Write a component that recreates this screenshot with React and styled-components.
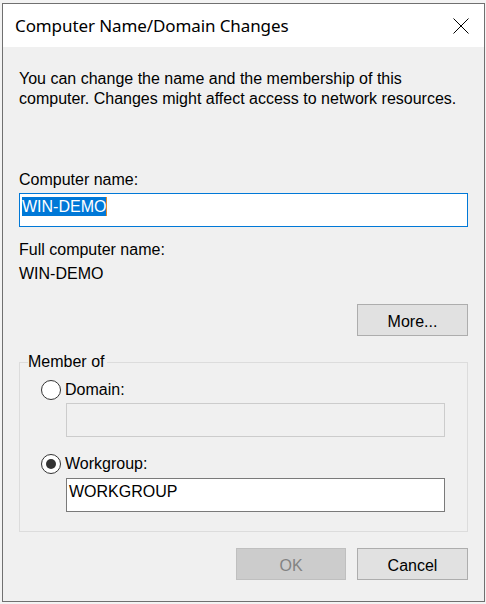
import React from 'react'
import styled, { createGlobalStyle } from 'styled-components'

const GlobalStyle = createGlobalStyle`
  html, body {
    margin: 0;
    padding: 0;
    background: #f3f3f3;
  }
  body {
    font-family: "Liberation Sans", Arial, sans-serif;
    color: #000;
  }
`

const Window = styled.div`
  box-sizing: border-box;
  width: 483px;
  height: 599px;
  margin: 3px 0 0 2px;
  border: 1px solid #707070;
  background: #f0f0f0;
  display: flex;
  flex-direction: column;
`

const TitleBar = styled.div`
  height: 43px;
  background: #fff;
  display: flex;
  align-items: center;
  justify-content: space-between;
  padding: 0 15px 0 12px;
`

const Title = styled.div`
  font-family: "Noto Sans", "Open Sans", sans-serif;
  font-size: 17px;
  letter-spacing: -0.1px;
  color: #000;
`

const CloseIcon = styled.svg`
  width: 16px;
  height: 16px;
  display: block;
`

const Content = styled.div`
  padding: 22px 16px 0 16px;
  font-size: 16px;
  line-height: 20px;
  display: flex;
  flex-direction: column;
`

const Intro = styled.p`
  margin: 0 0 61px;
`

const Label = styled.div`
  margin-top: ${(p) => p.$top || 0}px;
`

const TextBox = styled.div`
  box-sizing: border-box;
  height: 34px;
  margin: ${(p) => p.$margin || '0'};
  border: 1px solid ${(p) => (p.$focused ? '#0078d7' : p.$disabled ? '#cccccc' : '#7a7a7a')};
  background: ${(p) => (p.$disabled ? '#f0f0f0' : '#fff')};
  padding: 3px 2px 0;
  line-height: 20px;
  display: flex;
  align-items: flex-start;
`

const Selection = styled.span`
  background: #0078d7;
  color: #fff;
  line-height: 19px;
  border-right: 1px solid #e08a2c;
`

const Button = styled.button`
  box-sizing: border-box;
  width: ${(p) => p.$w || 111}px;
  height: 32px;
  font-family: inherit;
  font-size: 16px;
  padding: 4px 0 0;
  border: 1px solid ${(p) => (p.disabled ? '#bfbfbf' : '#adadad')};
  background: ${(p) => (p.disabled ? '#cccccc' : '#e1e1e1')};
  color: ${(p) => (p.disabled ? '#838383' : '#000')};
`

const MoreRow = styled.div`
  display: flex;
  justify-content: flex-end;
  margin-top: 20px;
`

const Group = styled.fieldset`
  margin: 16px 0 0;
  padding: 8px 22px 19px 21px;
  border: 1px solid #dcdcdc;
  min-width: 0;
`

const Legend = styled.legend`
  padding: 0 3px 0 0;
  margin-left: -13px;
  line-height: 20px;
`

const RadioRow = styled.label`
  display: flex;
  align-items: center;
  height: 20px;
  margin-top: ${(p) => p.$top || 0}px;
`

const RadioCircle = styled.span`
  box-sizing: border-box;
  width: 20px;
  height: 20px;
  border-radius: 50%;
  border: 1px solid #333;
  background: #fff;
  margin-right: 4px;
  display: flex;
  align-items: center;
  justify-content: center;

  &::after {
    content: '';
    width: 10px;
    height: 10px;
    border-radius: 50%;
    background: #333;
    display: ${(p) => (p.$checked ? 'block' : 'none')};
  }
`

const ButtonRow = styled.div`
  display: flex;
  justify-content: flex-end;
  gap: 11px;
  margin-top: 16px;
`

export default function App() {
  return (
    <>
      <GlobalStyle />
      <Window>
        <TitleBar>
          <Title>Computer Name/Domain Changes</Title>
          <CloseIcon viewBox="0 0 16 16">
            <path d="M0.5 0.5 L15.5 15.5 M15.5 0.5 L0.5 15.5" stroke="#000" strokeWidth="1" fill="none" />
          </CloseIcon>
        </TitleBar>
        <Content>
          <Intro>
            You can change the name and the membership of this
            <br />
            computer. Changes might affect access to network resources.
          </Intro>
          <Label>Computer name:</Label>
          <TextBox $focused $margin="3px 0 0">
            <Selection>WIN-DEMO</Selection>
          </TextBox>
          <Label $top={13}>Full computer name:</Label>
          <Label $top={4}>WIN-DEMO</Label>
          <MoreRow>
            <Button>More...</Button>
          </MoreRow>
          <Group>
            <Legend>Member of</Legend>
            <RadioRow>
              <RadioCircle />
              Domain:
            </RadioRow>
            <TextBox $disabled $margin="3px 0 0 25px" />
            <RadioRow $top={17}>
              <RadioCircle $checked />
              Workgroup:
            </RadioRow>
            <TextBox $margin="4px 0 0 25px">WORKGROUP</TextBox>
          </Group>
          <ButtonRow>
            <Button $w={110} disabled>OK</Button>
            <Button>Cancel</Button>
          </ButtonRow>
        </Content>
      </Window>
    </>
  )
}
